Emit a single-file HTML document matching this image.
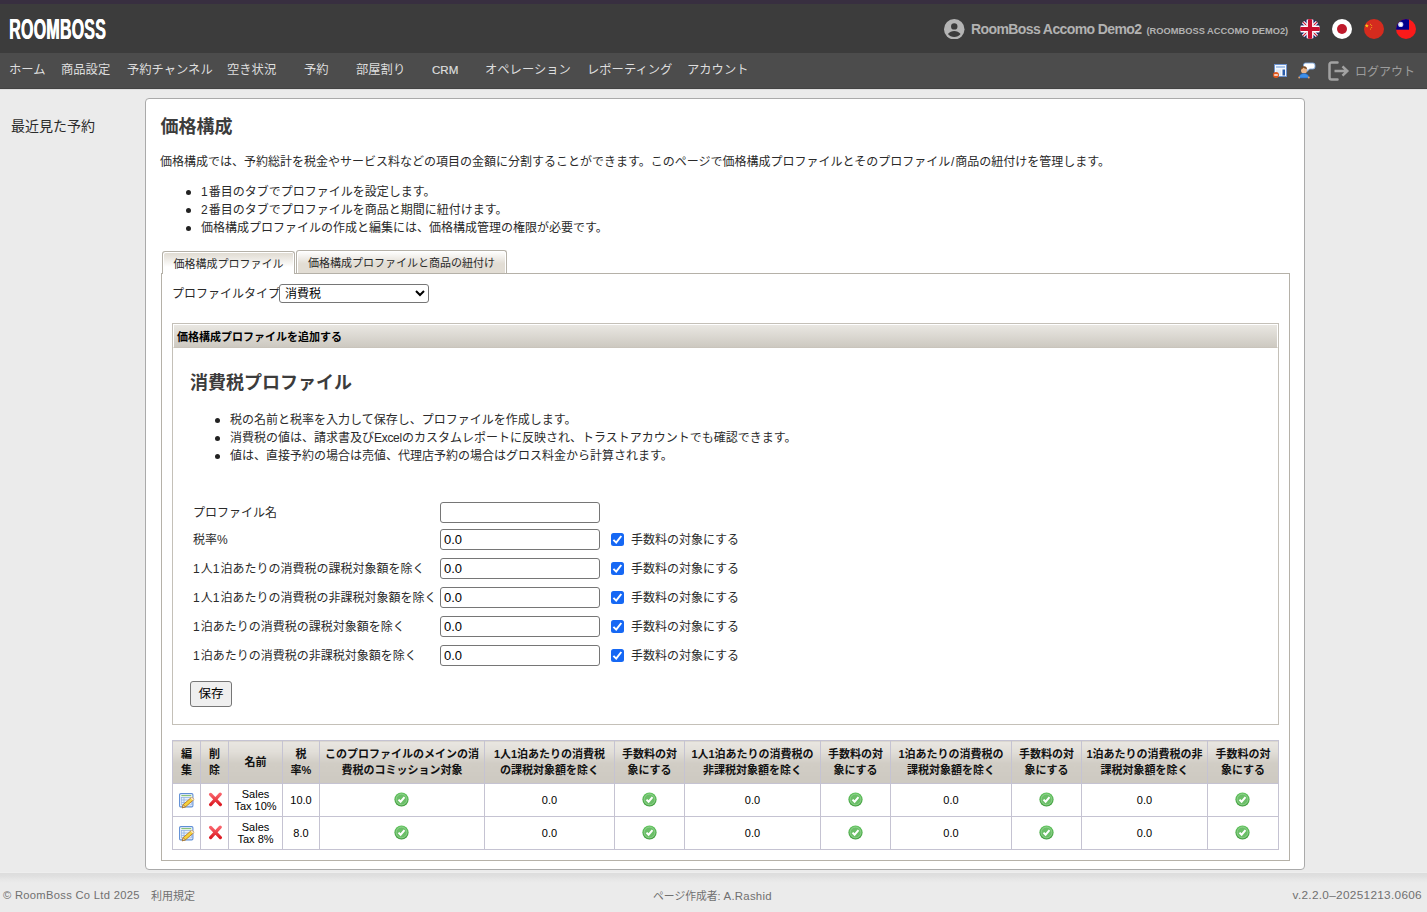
<!DOCTYPE html>
<html lang="ja">
<head>
<meta charset="utf-8">
<title>価格構成</title>
<style>
*{box-sizing:border-box;}
html,body{margin:0;padding:0;}
body{width:1427px;height:912px;overflow:hidden;background:#ebebeb;font-family:"Liberation Sans","Noto Sans CJK JP",sans-serif;font-size:12px;color:#2a2a2a;position:relative;}
.abs{position:absolute;}
#strip{left:0;top:0;width:1427px;height:4px;background:#382f40;}
#hdr{left:0;top:4px;width:1427px;height:49px;background:#3c3c3c;}
#nav{left:0;top:53px;width:1427px;height:36px;background:#4c4c4c;border-bottom:1px solid #424242;box-shadow:0 1px 0 #dedede;}
#logo{text-shadow:1px 0 #fff;left:8.600px;top:13.7px;font-weight:bold;font-size:29.5px;line-height:30px;color:#fff;transform-origin:0 50%;transform:scaleX(0.54);letter-spacing:0.5px;white-space:nowrap;}
.nv{position:absolute;top:54px;height:35px;line-height:32px;color:#dedede;font-size:12.3px;white-space:nowrap;}
#user{left:971px;top:19px;color:#b2b2b2;font-size:14px;font-weight:bold;line-height:20px;white-space:nowrap;letter-spacing:-0.6px;}
#user2{left:1146.5px;top:21px;color:#b2b2b2;font-size:9.3px;font-weight:bold;line-height:20px;white-space:nowrap;}
.flag{position:absolute;top:19px;width:20px;height:20px;}
#side{left:11px;top:116px;font-size:14px;line-height:20px;color:#2a2a2a;}
#panel{left:145px;top:98px;width:1160px;height:772px;background:#fff;border:1px solid #aaa;border-radius:4px;}
h1{position:absolute;left:160.5px;top:114px;margin:0;font-size:18px;line-height:26px;font-weight:bold;color:#3c3c3c;}
.p{margin-top:1px;position:absolute;white-space:nowrap;font-size:12px;line-height:18px;color:#2a2a2a;}
.b{margin:.5px 0 0 -1.5px;position:absolute;width:5px;height:5px;border-radius:50%;background:#222;}

.tab{position:absolute;height:24px;border:1px solid #b5b1a8;border-bottom:none;border-radius:3px 3px 0 0;font-size:11px;line-height:25px;text-align:center;color:#2a2a2a;white-space:nowrap;}
#tab1{left:162px;top:251px;width:133px;background:linear-gradient(#ded9cf 0,#ece9e3 30%,#fff 68%);box-shadow:inset 1px 1px 0 #fff,inset -1px 0 0 #fff;height:23px;z-index:3;}
#tab2{left:296px;top:250px;width:211px;height:23px;background:linear-gradient(#fff 0,#f3f1ed 25%,#e2ddd4 58%,#e2ddd4);box-shadow:inset 1px 1px 0 #fff,inset -1px 0 0 #fff;}
#tpanel{left:161px;top:273px;width:1129px;height:588px;border:1px solid #b5b1a8;background:#fff;}
select{position:absolute;left:279px;top:284px;width:150px;height:19px;font-family:"Liberation Sans","Noto Sans CJK JP",sans-serif;font-size:12px;padding:0 0 0 1px;border:1px solid #767676;border-radius:3px;background:#fff;color:#000;}
#box{left:172px;top:323px;width:1107px;height:402px;border:1px solid #c4c0b8;background:#fff;}
#boxh{left:173px;top:324px;width:1105px;height:24px;background:linear-gradient(#e9e7e2 0,#dedbd5 40%,#cdc9c1 100%);border:1px solid #fff;border-bottom:1px solid #c9c4bb;font-size:11px;font-weight:bold;line-height:24px;padding-left:3px;color:#000;}
h2{position:absolute;left:190px;top:370px;margin:0;font-size:18px;line-height:26px;font-weight:bold;color:#3c3c3c;}
.lbl{margin-top:1px;position:absolute;left:193px;font-size:12px;line-height:20px;white-space:nowrap;color:#2a2a2a;}
.inp{position:absolute;left:440px;width:160px;height:21px;border:1px solid #767676;border-radius:3px;background:#fff;font-family:"Liberation Sans","Noto Sans CJK JP",sans-serif;font-size:13px;line-height:19px;padding:0 0 0 3px;margin:0;color:#000;outline:none;}
.cb{margin-top:1px;position:absolute;left:611px;width:13px;height:13px;border-radius:2.5px;background:#1668f4;}
.cb svg{position:absolute;left:0;top:0;}
.cbl{margin-top:1px;position:absolute;left:631px;font-size:12px;line-height:18px;white-space:nowrap;color:#2a2a2a;}
#save{left:190px;top:681px;width:42px;height:26px;border:1px solid #767676;border-radius:3px;background:#efefef;font-family:"Liberation Sans","Noto Sans CJK JP",sans-serif;font-size:12.5px;line-height:23px;text-align:center;color:#000;padding:0;margin:0;}

#tbl{position:absolute;left:172px;top:740px;border-collapse:collapse;table-layout:fixed;width:1106px;}
#tbl th,#tbl td{border:1px solid #c5c3d2;padding:0;text-align:center;vertical-align:middle;}
#tbl th{height:43px;background:linear-gradient(#e9e6e1 0,#e1ded8 25%,#d1cdc5 52%,#cdc9c1 100%);font-size:11px;line-height:16.5px;font-weight:bold;color:#111;}
#tbl td{height:33px;font-size:11px;line-height:12px;color:#000;font-family:"Liberation Sans",sans-serif;}
.ok{display:inline-block;vertical-align:middle;}
#foot{left:0;top:872px;width:1427px;height:40px;background:linear-gradient(#eeeeee 0,#eeeeee 1px,#dddddd 1px,#dfdfdf 4px,#e6e6e6 7px,#ebebeb 11px);}
.ft{position:absolute;top:887.5px;font-size:11px;line-height:16px;color:#707070;white-space:nowrap;letter-spacing:0.3px;}
.d{letter-spacing:1px;}
</style>
</head>
<body>
<svg width="0" height="0" style="position:absolute"><defs><linearGradient id="gk" x1="0" y1="0" x2="0" y2="1"><stop offset="0" stop-color="#5fc45c"/><stop offset="1" stop-color="#3c9a39"/></linearGradient></defs><defs><linearGradient id="gx" x1="0" y1="0" x2="0" y2="1"><stop offset="0" stop-color="#f9626a"/><stop offset="1" stop-color="#dd1c24"/></linearGradient></defs></svg>
<div id="strip" class="abs"></div>
<div id="hdr" class="abs"></div>
<div id="nav" class="abs"></div>
<div id="logo" class="abs">ROOMBOSS</div>
<div class="nv" style="left:9px">ホーム</div>
<div class="nv" style="left:61px">商品設定</div>
<div class="nv" style="left:127px">予約チャンネル</div>
<div class="nv" style="left:227px">空き状況</div>
<div class="nv" style="left:304px">予約</div>
<div class="nv" style="left:356px">部屋割り</div>
<div class="nv" style="left:432px;top:53.500px;font-size:11.6px;-webkit-text-stroke:.2px #dedede">CRM</div>
<div class="nv" style="left:485px">オペレーション</div>
<div class="nv" style="left:587px">レポーティング</div>
<div class="nv" style="left:687px">アカウント</div>
<div class="nv" style="left:1355px;color:#9c9c9c;top:56px;font-size:12px">ログアウト</div>
<svg class="abs" style="left:1327px;top:61px" width="23" height="20" viewBox="0 0 23 20"><path d="M10.500 1.500H4.500a2 2 0 0 0-2 2v13a2 2 0 0 0 2 2h6" fill="none" stroke="#a2a2a2" stroke-width="2.500" stroke-linecap="round"/><path d="M7.500 10h12M15.500 5.300l4.800 4.700-4.800 4.700" fill="none" stroke="#a2a2a2" stroke-width="2.500"/></svg>
<svg class="abs" style="left:1272px;top:63px" width="16" height="16" viewBox="0 0 16 16"><rect x="2.500" y="1.500" width="12" height="12" fill="#f4f8fd" stroke="#6d93cf"/><rect x="4" y="3" width="9" height="2" fill="#a9c4ea"/><rect x="4" y="6.500" width="5" height="6" fill="#dfe9f7"/><rect x="10.500" y="6.500" width="2.500" height="6" fill="#2a5caa"/><circle cx="4" cy="12" r="3" fill="#e2571c"/><rect x="2.200" y="11.300" width="3.600" height="1.400" fill="#fff"/></svg>
<svg class="abs" style="left:1298px;top:62px" width="18" height="17" viewBox="0 0 18 17"><path d="M7.500 1h7.500a2 2 0 0 1 2 2v2a2 2 0 0 1-2 2h-3.500l-2.500 2.500v-2.500h-1.500a2 2 0 0 1-2-2v-2a2 2 0 0 1 2-2z" fill="#fff" stroke="#7aa6de" stroke-width=".9"/><circle cx="6" cy="8.500" r="3" fill="#e9b58a"/><path d="M3 7.500a3 3 0 0 1 6-.5c-2 0-3-1-3.500-1.500-.5 1-1.500 1.800-2.500 2z" fill="#7a4a22"/><path d="M1 16c0-3 2-4.500 5-4.500s5 1.500 5 4.500z" fill="#3f8fe8" stroke="#1f5fb8" stroke-width=".6"/><circle cx="1.200" cy="15.500" r=".9" fill="#e9a060"/><circle cx="10.800" cy="15.500" r=".9" fill="#e9a060"/></svg>
<svg class="abs" style="left:944px;top:18.5px" width="20.5" height="20.5" viewBox="0 0 20 20"><circle cx="10" cy="10" r="10" fill="#b4b4b4"/><circle cx="10" cy="7.2" r="3.1" fill="#3c3c3c"/><path d="M3.8 14.6c1.6-2 3.9-2.9 6.2-2.9s4.6.9 6.2 2.9c-1.5 1.9-3.7 3-6.2 3s-4.700-1.100-6.200-3z" fill="#3c3c3c"/></svg>
<div id="user" class="abs">RoomBoss Accomo Demo2</div>
<div id="user2" class="abs">(ROOMBOSS ACCOMO DEMO2)</div>
<svg class="flag" style="left:1300px" viewBox="0 0 20 20"><defs><clipPath id="fc"><circle cx="10" cy="10" r="10"/></clipPath></defs><g clip-path="url(#fc)"><rect width="20" height="20" fill="#1f2a6b"/><path d="M0 0L20 20M20 0L0 20" stroke="#fff" stroke-width="3.200"/><path d="M0 0L20 20M20 0L0 20" stroke="#c8102e" stroke-width="1.100"/><path d="M10 0V20M0 10H20" stroke="#fff" stroke-width="6.800"/><path d="M10 0V20M0 10H20" stroke="#c8102e" stroke-width="4.200"/></g></svg>
<svg class="flag" style="left:1332px" viewBox="0 0 20 20"><circle cx="10" cy="10" r="10" fill="#fff"/><circle cx="10" cy="10" r="5" fill="#bf1a2c"/></svg>
<svg class="flag" style="left:1364px" viewBox="0 0 20 20"><circle cx="10" cy="10" r="10" fill="#d52b1e"/><g transform="translate(0 1)"><path d="M3.200 5.300l.7 2 2.100.050-1.700 1.250.65 2-1.750-1.200-1.700 1.200.6-2-1.650-1.250 2.050-.050z" fill="#f5c518" transform="translate(.4 -.4) scale(.75)"/><circle cx="6.500" cy="4.200" r=".5" fill="#f5c518"/><circle cx="7.700" cy="5.600" r=".5" fill="#f5c518"/><circle cx="7.700" cy="7.500" r=".5" fill="#f5c518"/><circle cx="6.500" cy="9" r=".5" fill="#f5c518"/></g></svg>
<svg class="flag" style="left:1396px" viewBox="0 0 20 20"><g clip-path="url(#fc)"><rect width="20" height="20" fill="#fb1a1a"/><rect width="13" height="10.700" fill="#00008b"/><circle cx="4.700" cy="5.400" r="2.600" fill="#c9cdf0"/><circle cx="4.700" cy="5.400" r="1.500" fill="#fff"/></g></svg>
<div id="side" class="abs">最近見た予約</div>
<div id="panel" class="abs"></div>
<h1>価格構成</h1>
<div class="p" style="left:160px;top:152px">価格構成では、予約総計を税金やサービス料などの項目の金額に分割することができます。このページで価格構成プロファイルとそのプロファイル<span style="margin:0 .8px">/</span>商品の紐付けを管理します。</div>
<div class="b" style="left:187px;top:189px"></div>
<div class="p" style="left:201px;top:182px"><span class="d">1</span>番目のタブでプロファイルを設定します。</div>
<div class="b" style="left:187px;top:207px"></div>
<div class="p" style="left:201px;top:200px"><span class="d">2</span>番目のタブでプロファイルを商品と期間に紐付けます。</div>
<div class="b" style="left:187px;top:225px"></div>
<div class="p" style="left:201px;top:218px">価格構成プロファイルの作成と編集には、価格構成管理の権限が必要です。</div>

<div id="tpanel" class="abs"></div>
<div id="tab1" class="tab">価格構成プロファイル</div>
<div id="tab2" class="tab">価格構成プロファイルと商品の紐付け</div>
<div class="p" style="left:172px;top:284px;">プロファイルタイプ</div>
<select><option>消費税</option></select>
<div id="box" class="abs"></div>
<div id="boxh" class="abs">価格構成プロファイルを追加する</div>
<h2>消費税プロファイル</h2>
<div class="b" style="left:216px;top:417px"></div>
<div class="p" style="left:230px;top:410px">税の名前と税率を入力して保存し、プロファイルを作成します。</div>
<div class="b" style="left:216px;top:435px"></div>
<div class="p" style="left:230px;top:428px">消費税の値は、請求書及び<span style="letter-spacing:-.3px">Excel</span>のカスタムレポートに反映され、トラストアカウントでも確認できます。</div>
<div class="b" style="left:216px;top:453px"></div>
<div class="p" style="left:230px;top:446px">値は、直接予約の場合は売値、代理店予約の場合はグロス料金から計算されます。</div>
<div class="lbl" style="top:502px">プロファイル名</div>
<input class="inp" type="text" style="top:502px" value="">
<div class="lbl" style="top:529px">税率%</div>
<input class="inp" type="text" style="top:529px" value="0.0">
<div class="cb" style="top:532px"><svg width="13" height="13" viewBox="0 0 13 13"><path d="M2.400 6.900L5.200 9.600L10.300 3" fill="none" stroke="#fff" stroke-width="2"/></svg></div>
<div class="cbl" style="top:530px">手数料の対象にする</div>
<div class="lbl" style="top:558px"><span class="d">1</span>人<span class="d">1</span>泊あたりの消費税の課税対象額を除く</div>
<input class="inp" type="text" style="top:558px" value="0.0">
<div class="cb" style="top:561px"><svg width="13" height="13" viewBox="0 0 13 13"><path d="M2.400 6.900L5.200 9.600L10.300 3" fill="none" stroke="#fff" stroke-width="2"/></svg></div>
<div class="cbl" style="top:559px">手数料の対象にする</div>
<div class="lbl" style="top:587px"><span class="d">1</span>人<span class="d">1</span>泊あたりの消費税の非課税対象額を除く</div>
<input class="inp" type="text" style="top:587px" value="0.0">
<div class="cb" style="top:590px"><svg width="13" height="13" viewBox="0 0 13 13"><path d="M2.400 6.900L5.200 9.600L10.300 3" fill="none" stroke="#fff" stroke-width="2"/></svg></div>
<div class="cbl" style="top:588px">手数料の対象にする</div>
<div class="lbl" style="top:616px"><span class="d">1</span>泊あたりの消費税の課税対象額を除く</div>
<input class="inp" type="text" style="top:616px" value="0.0">
<div class="cb" style="top:619px"><svg width="13" height="13" viewBox="0 0 13 13"><path d="M2.400 6.900L5.200 9.600L10.300 3" fill="none" stroke="#fff" stroke-width="2"/></svg></div>
<div class="cbl" style="top:617px">手数料の対象にする</div>
<div class="lbl" style="top:645px"><span class="d">1</span>泊あたりの消費税の非課税対象額を除く</div>
<input class="inp" type="text" style="top:645px" value="0.0">
<div class="cb" style="top:648px"><svg width="13" height="13" viewBox="0 0 13 13"><path d="M2.400 6.900L5.200 9.600L10.300 3" fill="none" stroke="#fff" stroke-width="2"/></svg></div>
<div class="cbl" style="top:646px">手数料の対象にする</div>
<button id="save" class="abs" type="button">保存</button>
<table id="tbl"><colgroup><col style="width:28px"><col style="width:28px"><col style="width:54px"><col style="width:37px"><col style="width:165px"><col style="width:130px"><col style="width:70px"><col style="width:136px"><col style="width:70px"><col style="width:121px"><col style="width:70px"><col style="width:126px"><col style="width:71px"></colgroup>
<tr><th>編<br>集</th><th>削<br>除</th><th>名前</th><th>税<br>率%</th><th>このプロファイルのメインの消<br>費税のコミッション対象</th><th>1人1泊あたりの消費税<br>の課税対象額を除く</th><th>手数料の対<br>象にする</th><th>1人1泊あたりの消費税の<br>非課税対象額を除く</th><th>手数料の対<br>象にする</th><th>1泊あたりの消費税の<br>課税対象額を除く</th><th>手数料の対<br>象にする</th><th>1泊あたりの消費税の非<br>課税対象額を除く</th><th>手数料の対<br>象にする</th></tr>
<tr><td><svg class="ok" style="position:relative;top:1px" width="16" height="16" viewBox="0 0 16 16"><rect x=".6" y=".6" width="13.300" height="13.300" rx="1.200" fill="#fff" stroke="#5f8fd6" stroke-width="1.100"/><rect x="2.300" y="2.200" width="10" height="1" fill="#6db35a"/><rect x="2.300" y="4.500" width="10" height="7.500" fill="#e8f0fb" stroke="#8fb1e3" stroke-width=".8"/><path d="M2.300 7h10M2.300 9.500h10M5 4.500v7.500" stroke="#8fb1e3" stroke-width=".8"/><path d="M3.300 14.800l.9-3.200 8.500-7.400 2.200 2.300-8.500 7.400z" fill="#f4d33e" stroke="#c07a1e" stroke-width=".9" stroke-linejoin="round"/><path d="M3.300 14.800l.9-3.200 2.200 2.300z" fill="#f3dcb8" stroke="#8a5a1a" stroke-width=".6"/><path d="M11.600 5.200l2.200 2.300 1.100-1-2.200-2.300z" fill="#f6e7cf"/></svg></td><td><svg class="ok" style="position:relative;left:.5px;top:-.5px" width="15" height="15" viewBox="0 0 15 15"><path d="M2.600 2.400L12.400 12.600M12.200 2.200L2.600 12.600" stroke="url(#gx)" stroke-width="3.200" stroke-linecap="round"/></svg></td><td>Sales<br>Tax 10%</td><td>10.0</td><td><svg class="ok" style="position:relative;top:-.5px;left:-.5px" width="15" height="15" viewBox="0 0 15 15"><circle cx="7.500" cy="7.500" r="7.100" fill="url(#gk)"/><circle cx="7.500" cy="7.500" r="5.500" fill="#6bbf68" stroke="#b4e0b1" stroke-width=".6"/><path d="M4.500 7.600l2.100 2.100 3.900-4.600" fill="none" stroke="#fff" stroke-width="2"/></svg></td><td>0.0</td><td><svg class="ok" style="position:relative;top:-.5px;left:-.5px" width="15" height="15" viewBox="0 0 15 15"><circle cx="7.500" cy="7.500" r="7.100" fill="url(#gk)"/><circle cx="7.500" cy="7.500" r="5.500" fill="#6bbf68" stroke="#b4e0b1" stroke-width=".6"/><path d="M4.500 7.600l2.100 2.100 3.900-4.600" fill="none" stroke="#fff" stroke-width="2"/></svg></td><td>0.0</td><td><svg class="ok" style="position:relative;top:-.5px;left:-.5px" width="15" height="15" viewBox="0 0 15 15"><circle cx="7.500" cy="7.500" r="7.100" fill="url(#gk)"/><circle cx="7.500" cy="7.500" r="5.500" fill="#6bbf68" stroke="#b4e0b1" stroke-width=".6"/><path d="M4.500 7.600l2.100 2.100 3.900-4.600" fill="none" stroke="#fff" stroke-width="2"/></svg></td><td>0.0</td><td><svg class="ok" style="position:relative;top:-.5px;left:-.5px" width="15" height="15" viewBox="0 0 15 15"><circle cx="7.500" cy="7.500" r="7.100" fill="url(#gk)"/><circle cx="7.500" cy="7.500" r="5.500" fill="#6bbf68" stroke="#b4e0b1" stroke-width=".6"/><path d="M4.500 7.600l2.100 2.100 3.900-4.600" fill="none" stroke="#fff" stroke-width="2"/></svg></td><td>0.0</td><td><svg class="ok" style="position:relative;top:-.5px;left:-.5px" width="15" height="15" viewBox="0 0 15 15"><circle cx="7.500" cy="7.500" r="7.100" fill="url(#gk)"/><circle cx="7.500" cy="7.500" r="5.500" fill="#6bbf68" stroke="#b4e0b1" stroke-width=".6"/><path d="M4.500 7.600l2.100 2.100 3.900-4.600" fill="none" stroke="#fff" stroke-width="2"/></svg></td></tr>
<tr><td><svg class="ok" style="position:relative;top:1px" width="16" height="16" viewBox="0 0 16 16"><rect x=".6" y=".6" width="13.300" height="13.300" rx="1.200" fill="#fff" stroke="#5f8fd6" stroke-width="1.100"/><rect x="2.300" y="2.200" width="10" height="1" fill="#6db35a"/><rect x="2.300" y="4.500" width="10" height="7.500" fill="#e8f0fb" stroke="#8fb1e3" stroke-width=".8"/><path d="M2.300 7h10M2.300 9.500h10M5 4.500v7.500" stroke="#8fb1e3" stroke-width=".8"/><path d="M3.300 14.800l.9-3.200 8.500-7.400 2.200 2.300-8.500 7.400z" fill="#f4d33e" stroke="#c07a1e" stroke-width=".9" stroke-linejoin="round"/><path d="M3.300 14.800l.9-3.200 2.200 2.300z" fill="#f3dcb8" stroke="#8a5a1a" stroke-width=".6"/><path d="M11.600 5.200l2.200 2.300 1.100-1-2.200-2.300z" fill="#f6e7cf"/></svg></td><td><svg class="ok" style="position:relative;left:.5px;top:-.5px" width="15" height="15" viewBox="0 0 15 15"><path d="M2.600 2.400L12.400 12.600M12.200 2.200L2.600 12.600" stroke="url(#gx)" stroke-width="3.200" stroke-linecap="round"/></svg></td><td>Sales<br>Tax 8%</td><td>8.0</td><td><svg class="ok" style="position:relative;top:-.5px;left:-.5px" width="15" height="15" viewBox="0 0 15 15"><circle cx="7.500" cy="7.500" r="7.100" fill="url(#gk)"/><circle cx="7.500" cy="7.500" r="5.500" fill="#6bbf68" stroke="#b4e0b1" stroke-width=".6"/><path d="M4.500 7.600l2.100 2.100 3.900-4.600" fill="none" stroke="#fff" stroke-width="2"/></svg></td><td>0.0</td><td><svg class="ok" style="position:relative;top:-.5px;left:-.5px" width="15" height="15" viewBox="0 0 15 15"><circle cx="7.500" cy="7.500" r="7.100" fill="url(#gk)"/><circle cx="7.500" cy="7.500" r="5.500" fill="#6bbf68" stroke="#b4e0b1" stroke-width=".6"/><path d="M4.500 7.600l2.100 2.100 3.900-4.600" fill="none" stroke="#fff" stroke-width="2"/></svg></td><td>0.0</td><td><svg class="ok" style="position:relative;top:-.5px;left:-.5px" width="15" height="15" viewBox="0 0 15 15"><circle cx="7.500" cy="7.500" r="7.100" fill="url(#gk)"/><circle cx="7.500" cy="7.500" r="5.500" fill="#6bbf68" stroke="#b4e0b1" stroke-width=".6"/><path d="M4.500 7.600l2.100 2.100 3.900-4.600" fill="none" stroke="#fff" stroke-width="2"/></svg></td><td>0.0</td><td><svg class="ok" style="position:relative;top:-.5px;left:-.5px" width="15" height="15" viewBox="0 0 15 15"><circle cx="7.500" cy="7.500" r="7.100" fill="url(#gk)"/><circle cx="7.500" cy="7.500" r="5.500" fill="#6bbf68" stroke="#b4e0b1" stroke-width=".6"/><path d="M4.500 7.600l2.100 2.100 3.900-4.600" fill="none" stroke="#fff" stroke-width="2"/></svg></td><td>0.0</td><td><svg class="ok" style="position:relative;top:-.5px;left:-.5px" width="15" height="15" viewBox="0 0 15 15"><circle cx="7.500" cy="7.500" r="7.100" fill="url(#gk)"/><circle cx="7.500" cy="7.500" r="5.500" fill="#6bbf68" stroke="#b4e0b1" stroke-width=".6"/><path d="M4.500 7.600l2.100 2.100 3.900-4.600" fill="none" stroke="#fff" stroke-width="2"/></svg></td></tr>
</table>
<div id="foot" class="abs"></div>
<div class="ft" style="left:3px;font-size:11.2px;top:886.6px">© RoomBoss Co Ltd 2025</div>
<div class="ft" style="left:151px;letter-spacing:0">利用規定</div>
<div class="ft" style="left:653px;font-size:10.8px;letter-spacing:0">ページ作成者: <span style="font-size:11.4px;letter-spacing:.25px">A.Rashid</span></div>
<div class="ft" style="right:5px;font-size:11.8px;top:886.6px">v.2.2.0–20251213.0606</div>
</body>
</html>
